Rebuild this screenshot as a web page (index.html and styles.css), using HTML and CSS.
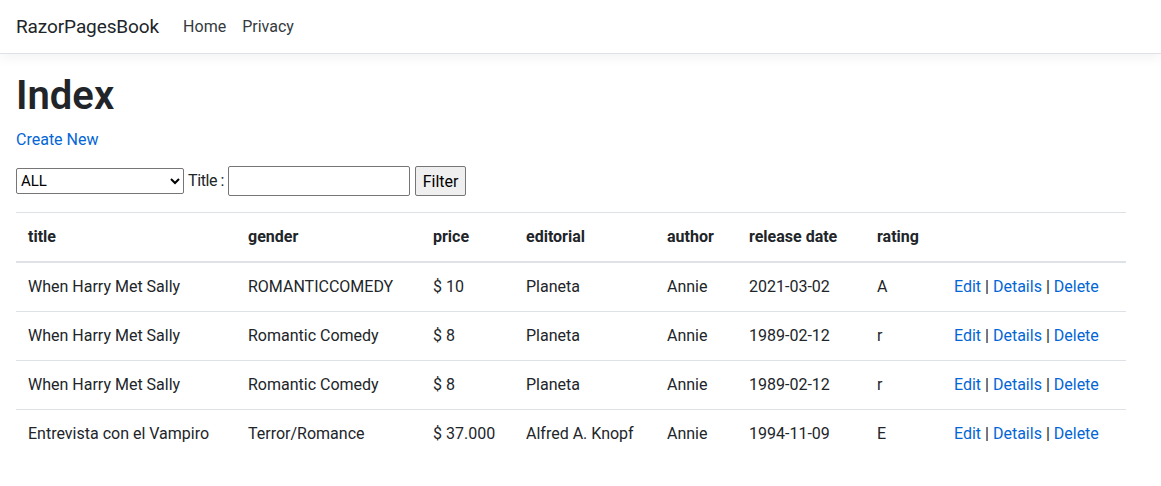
FILE: index.html
```html
<!DOCTYPE html>
<html lang="en">
<head>
<meta charset="utf-8">
<title>Index - RazorPagesBook</title>
<link rel="stylesheet" href="styles.css">
</head>
<body>
<header class="site-header">
  <nav class="navbar">
    <a class="brand" href="#">RazorPagesBook</a>
    <ul class="nav-list">
      <li><a class="nav-link" href="#">Home</a></li>
      <li><a class="nav-link" href="#">Privacy</a></li>
    </ul>
  </nav>
</header>
<div class="container">
  <main class="main">
    <h1 class="page-title">Index</h1>
    <p class="create"><a href="#">Create New</a></p>
    <form class="filter-form">
      <select class="filter-select">
        <option>ALL</option>
      </select>
      <label class="filter-label">Title :</label>
      <input class="filter-input" type="text">
      <button class="filter-button" type="button">Filter</button>
    </form>
    <table class="table">
      <colgroup>
        <col class="c-title"><col class="c-gender"><col class="c-price"><col class="c-editorial"><col class="c-author"><col class="c-date"><col class="c-rating"><col class="c-actions">
      </colgroup>
      <thead>
        <tr>
          <th>title</th><th>gender</th><th>price</th><th>editorial</th><th>author</th><th>release date</th><th>rating</th><th></th>
        </tr>
      </thead>
      <tbody>
        <tr>
          <td>When Harry Met Sally</td><td>ROMANTICCOMEDY</td><td>$ 10</td><td>Planeta</td><td>Annie</td><td>2021-03-02</td><td>A</td>
          <td><a href="#">Edit</a> | <a href="#">Details</a> | <a href="#">Delete</a></td>
        </tr>
        <tr>
          <td>When Harry Met Sally</td><td>Romantic Comedy</td><td>$ 8</td><td>Planeta</td><td>Annie</td><td>1989-02-12</td><td>r</td>
          <td><a href="#">Edit</a> | <a href="#">Details</a> | <a href="#">Delete</a></td>
        </tr>
        <tr>
          <td>When Harry Met Sally</td><td>Romantic Comedy</td><td>$ 8</td><td>Planeta</td><td>Annie</td><td>1989-02-12</td><td>r</td>
          <td><a href="#">Edit</a> | <a href="#">Details</a> | <a href="#">Delete</a></td>
        </tr>
        <tr>
          <td>Entrevista con el Vampiro</td><td>Terror/Romance</td><td>$ 37.000</td><td>Alfred A. Knopf</td><td>Annie</td><td>1994-11-09</td><td>E</td>
          <td><a href="#">Edit</a> | <a href="#">Details</a> | <a href="#">Delete</a></td>
        </tr>
      </tbody>
    </table>
  </main>
</div>
</body>
</html>
```
FILE: styles.css
```css
html, body {
  margin: 0;
  padding: 0;
}
body {
  font-family: Roboto, "Liberation Sans", sans-serif;
  font-size: 16px;
  line-height: 1.5;
  color: #212529;
  background: #fff;
}
a {
  color: #0366d6;
  text-decoration: none;
}
.site-header {
  margin-bottom: 16px;
}
.navbar {
  display: flex;
  align-items: center;
  height: 53px;
  padding: 0 16px;
  border-bottom: 1px solid #dee2e6;
  box-shadow: 0 4px 12px rgba(0, 0, 0, 0.05);
  background: #fff;
}
.brand {
  font-size: 19px;
  line-height: 30px;
  color: #212529;
  margin-right: 16px;
  white-space: nowrap;
  letter-spacing: -0.1px;
}
.nav-list {
  display: flex;
  list-style: none;
  margin: 0;
  padding: 0;
}
.nav-link {
  display: block;
  padding: 8px;
  color: #343a40;
}
.container {
  padding: 0 16px;
  width: 1110px;
}
.main {
  padding-top: 2px;
}
.page-title {
  font-size: 40px;
  font-weight: 600;
  line-height: 1.2;
  margin: 0 0 8px;
}
.create {
  margin: 0 0 14px;
}
.filter-form {
  margin: 0 0 16px;
  height: 30px;
  display: flex;
  align-items: center;
  gap: 4px;
}
.filter-select {
  font-family: inherit;
  font-size: 15px;
  width: 168px;
  height: 26px;
  margin: 0;
  border: 1px solid #767676;
  border-radius: 2px;
  background: #fff;
  color: #000;
}
.filter-label {
  font-size: 16px;
  letter-spacing: -0.4px;
}
.filter-input {
  font-family: inherit;
  font-size: 16px;
  width: 182px;
  height: 30px;
  box-sizing: border-box;
  margin: 0;
  border: 1px solid #767676;
  border-radius: 2px;
  padding: 1px 2px;
}
.filter-button {
  font-family: inherit;
  font-size: 16px;
  height: 30px;
  width: 51px;
  margin: 0 0 0 1px;
  box-sizing: border-box;
  padding: 1px 6px;
  border: 1px solid #767676;
  border-radius: 2px;
  background: #efefef;
  color: #000;
}
.table {
  width: 1110px;
  border-collapse: collapse;
  table-layout: fixed;
  margin-bottom: 16px;
}
.table th,
.table td {
  padding: 12px;
  text-align: left;
  vertical-align: top;
  border-top: 1px solid #dee2e6;
  white-space: nowrap;
}
.table thead th {
  font-weight: 700;
  vertical-align: bottom;
  border-bottom: 2px solid #dee2e6;
}
.c-title { width: 220px; }
.c-gender { width: 185px; }
.c-price { width: 93px; }
.c-editorial { width: 141px; }
.c-author { width: 82px; }
.c-date { width: 128px; }
.c-rating { width: 77px; }
.c-actions { width: 184px; }
```
